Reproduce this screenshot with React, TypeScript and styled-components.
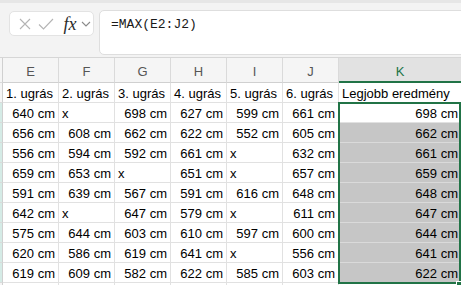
import React from "react";
import styled, { createGlobalStyle } from "styled-components";

const GlobalStyle = createGlobalStyle`
  html, body { margin: 0; padding: 0; background: #ffffff; overflow: hidden; }
  body { font-family: "Liberation Sans", Arial, sans-serif; }
  * { box-sizing: border-box; }
`;

const Page = styled.div`
  width: 461px;
  height: 285px;
  overflow: hidden;
  display: flex;
  flex-direction: column;
  background: #ffffff;
`;

const FormulaBar = styled.div`
  height: 57px;
  flex: none;
  display: flex;
  align-items: flex-start;
  gap: 5px;
  padding: 7px 0 0 9px;
  background: #f3f3f3;
  border-top: 3px solid #e6e6e6;
`;

const FuncBox = styled.div`
  width: 85px;
  height: 25px;
  margin-top: 1px;
  flex: none;
  display: flex;
  align-items: center;
  padding-left: 5px;
  background: #ffffff;
  border: 1px solid #e3e3e3;
  border-radius: 5px;
`;

const IconSlot = styled.span<{ $w: number }>`
  width: ${(p) => p.$w}px;
  height: 20px;
  display: flex;
  align-items: center;
  justify-content: center;
  flex: none;
`;

const Fx = styled.span`
  font-family: "Liberation Serif", "Times New Roman", serif;
  font-style: italic;
  font-size: 18px;
  color: #2b2b2b;
  width: 20px;
  text-align: center;
  margin-left: 3px;
  line-height: 20px;
`;

const FormulaInput = styled.div`
  flex: 1;
  height: 45px;
  margin-right: -12px;
  background: #ffffff;
  border: 1px solid #dedede;
  border-radius: 5px;
  padding: 6px 0 0 11px;
  font-family: "Liberation Mono", "Courier New", monospace;
  font-size: 13px;
  line-height: 16px;
  color: #1a1a1a;
`;

const Grid = styled.div`
  position: relative;
  display: grid;
  grid-template-columns: 3px repeat(6, 56px) 123px;
  grid-template-rows: 25px repeat(11, 20px);
  border-top: 1px solid #d6d6d6;
`;

const ColHeader = styled.div<{ $active?: boolean }>`
  display: flex;
  align-items: center;
  justify-content: center;
  padding-top: 3px;
  background: ${(p) => (p.$active ? "#e2e2e2" : "#f5f5f5")};
  color: ${(p) => (p.$active ? "#217346" : "#555555")};
  font-size: 13px;
  border-right: 1px solid #dadada;
  border-bottom: ${(p) => (p.$active ? "2px solid #217346" : "1px solid #d0d0d0")};
`;

const RowHead = styled.div<{ $sel?: boolean; $top?: boolean }>`
  background: ${(p) => (p.$top ? "#f5f5f5" : p.$sel ? "#d5ebe6" : "#f5f5f5")};
  border-bottom: 1px solid #dadada;
  border-right: 1px solid #d0d0d0;
`;

const Cell = styled.div<{ $align?: "left" | "right"; $sel?: boolean }>`
  display: flex;
  align-items: center;
  justify-content: ${(p) => (p.$align === "right" ? "flex-end" : "flex-start")};
  padding: 1px 3px 0 3px;
  font-size: 13px;
  color: #000000;
  white-space: nowrap;
  overflow: visible;
  background: ${(p) => (p.$sel ? "#c6c6c6" : "#ffffff")};
  border-right: 1px solid ${(p) => (p.$sel ? "#dadada" : "#e1e1e1")};
  border-bottom: 1px solid ${(p) => (p.$sel ? "#dadada" : "#e1e1e1")};
`;

const Selection = styled.div`
  position: absolute;
  left: 338px;
  top: 44px;
  width: 123px;
  height: 182px;
  border: 2px solid #217346;
  pointer-events: none;
`;

const FillHandle = styled.div`
  position: absolute;
  left: 456px;
  top: 223px;
  width: 6px;
  height: 6px;
  background: #217346;
  border: 1px solid #ffffff;
`;

const cols = ["E", "F", "G", "H", "I", "J", "K"];
const headers = ["1. ugrás", "2. ugrás", "3. ugrás", "4. ugrás", "5. ugrás", "6. ugrás", "Legjobb eredmény"];

const data: (number | null)[][] = [
  [640, null, 698, 627, 599, 661, 698],
  [656, 608, 662, 622, 552, 605, 662],
  [556, 594, 592, 661, null, 632, 661],
  [659, 653, null, 651, null, 657, 659],
  [591, 639, 567, 591, 616, 648, 648],
  [642, null, 647, 579, null, 611, 647],
  [575, 644, 603, 610, 597, 600, 644],
  [620, 586, 619, 641, null, 556, 641],
  [619, 609, 582, 622, 585, 603, 622],
];

export default function App() {
  return (
    <Page>
      <GlobalStyle />
      <FormulaBar>
        <FuncBox>
          <IconSlot $w={20}>
            <svg width="12" height="12" viewBox="0 0 12 12">
              <path d="M1 1 L11 11 M11 1 L1 11" stroke="#b4b4b4" strokeWidth="1.1" fill="none" />
            </svg>
          </IconSlot>
          <IconSlot $w={22}>
            <svg width="16" height="12" viewBox="0 0 16 12">
              <path d="M1 6.5 L5.5 11 L15 1" stroke="#b4b4b4" strokeWidth="1.1" fill="none" />
            </svg>
          </IconSlot>
          <Fx>fx</Fx>
          <IconSlot $w={12}>
            <svg width="10" height="6" viewBox="0 0 10 6">
              <path d="M1 1 L5 5 L9 1" stroke="#8a8a8a" strokeWidth="1.1" fill="none" />
            </svg>
          </IconSlot>
        </FuncBox>
        <FormulaInput>=MAX(E2:J2)</FormulaInput>
      </FormulaBar>
      <Grid>
        <RowHead $top />
        {cols.map((c) => (
          <ColHeader key={c} $active={c === "K"}>
            {c}
          </ColHeader>
        ))}
        <RowHead $top />
        {headers.map((h) => (
          <Cell key={h}>{h}</Cell>
        ))}
        {data.map((row, ri) => (
          <React.Fragment key={ri}>
            <RowHead $sel />
            {row.map((v, ci) => (
              <Cell
                key={ci}
                $align={v === null ? "left" : "right"}
                $sel={ci === 6 && ri > 0}
              >
                {v === null ? "x" : `${v} cm`}
              </Cell>
            ))}
          </React.Fragment>
        ))}
        <RowHead />
        {cols.map((c) => (
          <Cell key={"e" + c} />
        ))}
        <Selection />
        <FillHandle />
      </Grid>
    </Page>
  );
}
